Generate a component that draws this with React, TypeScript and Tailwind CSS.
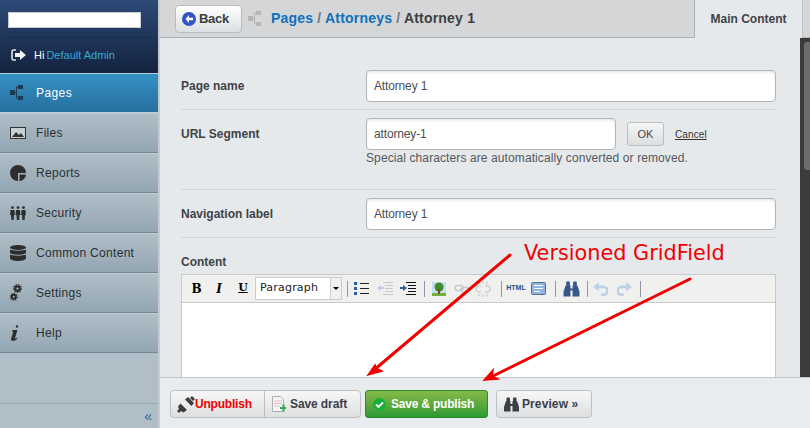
import React from 'react';

const font = { fontFamily: '"Liberation Sans", Arial, sans-serif' };

const SiteTreeIcon = ({ color = '#1c3a52', className = '' }: { color?: string; className?: string }) => (
  <svg width="14" height="16" viewBox="0 0 14 16" className={className}>
    <rect x="0" y="5" width="5" height="5" fill={color} />
    <rect x="8" y="0" width="5" height="4" fill={color} />
    <rect x="8" y="11" width="5" height="4" fill={color} />
    <path d="M5 7.5h2M6.5 2v11M6.5 2h2M6.5 13h2" stroke={color} strokeWidth="1" fill="none" />
  </svg>
);

const FilesIcon = () => (
  <svg width="16" height="12" viewBox="0 0 16 12">
    <rect x="0.5" y="0.5" width="15" height="11" fill="#c9d0d5" stroke="#333" />
    <path d="M2 10l4-5 3 3 2-2 3 4z" fill="#333" />
  </svg>
);

const ReportsIcon = () => (
  <svg width="16" height="16" viewBox="0 0 16 16" fill="#2e2e2e">
    <path d="M8 0a8 8 0 1 0 0 16V8h8a8 8 0 0 0-8-8z" />
    <path d="M9.500 9.500H16a7 7 0 0 1-6.500 6.500z" />
  </svg>
);

const Person = ({ x }: { x: number }) => (
  <g fill="#2e2e2e">
    <circle cx={x} cy="1.6" r="1.4" />
    <path d={`M${x - 2} 4h4l.4 5h-.9l-.4 5h-2.200l-.4-5h-.9z`} />
  </g>
);

const SecurityIcon = () => (
  <svg width="16" height="14" viewBox="0 0 16 14">
    <Person x={2.5} />
    <Person x={8} />
    <Person x={13.5} />
  </svg>
);

const DatabaseIcon = () => (
  <svg width="16" height="16" viewBox="0 0 16 16" fill="#2e2e2e">
    <ellipse cx="8" cy="2.5" rx="8" ry="2.5" />
    <path d="M0 4.5c1.500 1.500 14.500 1.500 16 0v3c0 3-16 3-16 0z" />
    <path d="M0 9.5c1.500 1.500 14.500 1.500 16 0v3.500c0 4-16 4-16 0z" />
  </svg>
);

const Gear = ({ cx, cy, r }: { cx: number; cy: number; r: number }) => (
  <g fill="none" stroke="#2e2e2e">
    <circle cx={cx} cy={cy} r={r * 0.5} strokeWidth={r * 0.5} />
    <circle cx={cx} cy={cy} r={r * 0.85} strokeWidth={r * 0.35} strokeDasharray="1.3 1.3" />
  </g>
);

const SettingsIcon = () => (
  <svg width="12" height="17" viewBox="0 0 12 17">
    <Gear cx={7.5} cy={4.5} r={4.5} />
    <Gear cx={3.8} cy={12.8} r={4} />
  </svg>
);

const HelpIcon = () => (
  <svg width="9" height="16" viewBox="0 0 9 16" fill="#2e2e2e">
    <circle cx="7" cy="1.5" r="1.2" />
    <path d="M3 5h4.500L5 13c0 .8.8.6 2-.2l.5.6C6 15 4.800 15.700 2.800 15.700 1 15.700.8 14.500 1.200 13.300L3.200 7 1.800 6.600z" />
  </svg>
);

const LogoutIcon = () => (
  <svg width="15" height="12" viewBox="0 0 15 12">
    <path d="M5 1H2.500Q1 1 1 2.500v7Q1 11 2.500 11H5" fill="none" stroke="#dfe4e8" strokeWidth="1.600" />
    <path d="M4 4h5V1l6 5-6 5V8H4z" fill="#f2f4f5" />
  </svg>
);

const BinocularsIcon = ({ fill = '#3a3f44', w = 15, h = 15 }: { fill?: string; w?: number; h?: number }) => (
  <svg width={w} height={h} viewBox="0 0 15 15" fill={fill}>
    <rect x="2.500" y="0.500" width="3.500" height="4" rx="1" />
    <rect x="9" y="0.500" width="3.500" height="4" rx="1" />
    <path d="M2 4h4.500v3h2V4H13l2 6v4.500H8.500V9h-2v5.500H0V10z" />
  </svg>
);

const navItems = [
  { label: 'Files', icon: <FilesIcon /> },
  { label: 'Reports', icon: <ReportsIcon /> },
  { label: 'Security', icon: <SecurityIcon /> },
  { label: 'Common Content', icon: <DatabaseIcon /> },
  { label: 'Settings', icon: <SettingsIcon /> },
  { label: 'Help', icon: <HelpIcon /> },
];

const Sidebar = () => (
  <aside className="w-[160px] shrink-0 h-full flex flex-col bg-[#b0bec7] border-r-2 border-[#c6cbcf]">
    <div className="h-[73px] px-[6px] pt-[12px] bg-gradient-to-b from-[#2c4a77] to-[#14233f]">
      <div className="ml-[2px] w-[133px] h-[16px] bg-white border border-[#c8ccd0]" />
      <div className="mt-[9px] border-t border-[#17324a] flex items-center h-[35px] pl-[5px] text-[11px]">
        <span className="w-[23px] flex"><LogoutIcon /></span>
        <span className="text-white">Hi</span>
        <span className="text-[#35a9d4] ml-[2px]">Default Admin</span>
      </div>
    </div>
    <div className="h-[40px] flex items-center bg-gradient-to-b from-[#3590c4] to-[#26709f] border-y border-[#b7cfdd] text-white text-[12px] tracking-[0.4px]">
      <span className="w-[36px] pl-[10px] flex"><SiteTreeIcon /></span>
      Pages
    </div>
    {navItems.map(item => (
      <div
        key={item.label}
        className="h-[40px] flex items-center bg-gradient-to-b from-[#b0bec7] to-[#93a6b3] border-b border-[#6f8899] shadow-[inset_0_1px_0_#c0ccd3] text-[#2b2f33] text-[12px] tracking-[0.3px]"
      >
        <span className="w-[36px] pl-[10px] flex items-center">{item.icon}</span>
        {item.label}
      </div>
    ))}
    <div className="flex-1" />
    <div className="h-[25px] border-t border-[#98a9b5] flex items-center justify-end pr-[6px] text-[14px] leading-none text-[#2f6a96]">
      «
    </div>
  </aside>
);

const TopBar = () => (
  <div className="h-[38px] flex bg-[#d4d6d8] shrink-0">
    <div className="flex-1 flex items-center pl-[15px] border-b border-r border-[#aeb0b3]">
      <button className="h-[28px] w-[67px] flex items-center gap-[3px] pl-[6px] rounded-[4px] border border-[#b9bcbf] bg-gradient-to-b from-white to-[#dcdfe1] text-[13px] tracking-[-0.3px] font-bold text-[#3d3d3f]">
        <svg width="14" height="14" viewBox="0 0 14 14">
          <circle cx="7" cy="7" r="7" fill="#2f55c8" />
          <path d="M7 3L3.500 7 7 11V8.300h4V5.700H7z" fill="#fff" />
        </svg>
        Back
      </button>
      <SiteTreeIcon color="#b4b6b8" className="ml-[6px]" />
      <div className="ml-[9px] text-[14px] font-bold tracking-[0.2px] text-[#3f3f42]">
        <span className="text-[#0f70bc]">Pages</span>
        <span className="text-[#6d7a85]"> / </span>
        <span className="text-[#0f70bc]">Attorneys</span>
        <span className="text-[#6d7a85]"> / </span>
        Attorney 1
      </div>
    </div>
    <div className="w-[107px] bg-[#e6e9ec] flex items-center justify-center text-[12px] font-bold text-[#3f4347]">
      Main Content
    </div>
    <div className="w-[8px] border-b border-l border-[#aeb0b3] border-l-[#c0c2c4]" />
  </div>
);

const TextField = ({ value, className = 'w-[410px]' }: { value: string; className?: string }) => (
  <div className={`${className} h-[32px] flex items-center px-[7px] bg-white rounded-[4px] border border-[#b3b5b7] shadow-[inset_0_2px_2px_#ececec] text-[12px] tracking-[-0.15px] text-[#4a4d50]`}>
    {value}
  </div>
);

const Toolbtn = ({ children, className = 'w-[24px]' }: { children: React.ReactNode; className?: string }) => (
  <span className={`${className} h-[20px] flex items-center justify-center`}>{children}</span>
);

const Sep = ({ className = '' }: { className?: string }) => <span className={`w-px h-[16px] bg-[#8d99a8] ${className}`} />;

const serif = { fontFamily: '"DejaVu Serif", serif' };

const EditorToolbar = () => (
  <div className="h-[28px] flex items-center pl-[4px] bg-[#f0f0ee] border-b border-[#c9c9c9]" style={{ fontFamily: '"DejaVu Sans", sans-serif' }}>
    <Toolbtn className="w-[21px]"><b className="text-[12px] text-black" style={serif}>B</b></Toolbtn>
    <Toolbtn className="w-[24px]"><i className="font-bold text-[12px] text-black" style={serif}>I</i></Toolbtn>
    <Toolbtn className="w-[24px]"><u className="font-bold text-[11px] text-black" style={serif}>U</u></Toolbtn>
    <div className="w-[87px] h-[23px] flex bg-white border border-[#cccccc] text-[11px] text-[#222] tracking-[0.2px]">
      <span className="flex-1 flex items-center pl-[4px]">Paragraph</span>
      <span className="w-[11px] bg-[#f0f0f0] border-l border-[#cccccc] flex items-center justify-center">
        <span className="w-0 h-0 border-x-[3px] border-x-transparent border-t-[3px] border-t-black" />
      </span>
    </div>
    <Sep className="ml-[5px]" />
    <Toolbtn className="w-[27px]">
      <svg width="15" height="13" viewBox="0 0 15 13"><path d="M6 1.500h9M6 6.500h9M6 11.500h9" stroke="#222" strokeWidth="1.200" /><path d="M0 0h3v3H0zM0 5h3v3H0zM0 10h3v3H0z" fill="#2a5f9e" /></svg>
    </Toolbtn>
    <Toolbtn className="w-[20px]">
      <svg width="16" height="13" viewBox="0 0 16 13"><path d="M6 .5h10M8 3.500h8M8 6.500h8M8 9.500h8M6 12.500h10" stroke="#c5c8cb" /><path d="M0 6l4-3v2h3v2H4v2z" fill="#bcd0e6" /></svg>
    </Toolbtn>
    <Toolbtn className="w-[26px]">
      <svg width="16" height="13" viewBox="0 0 16 13"><path d="M6 .5h10M8 3.500h8M8 6.500h8M8 9.500h8M6 12.500h10" stroke="#111" /><path d="M7 6L3 3v2H0v2h3v2z" fill="#2a5f9e" /></svg>
    </Toolbtn>
    <Sep className="ml-[3px]" />
    <Toolbtn className="w-[28px]">
      <svg width="14" height="14" viewBox="0 0 14 14"><rect width="14" height="14" fill="#bfe0f5" /><rect y="11" width="14" height="3" fill="#6fb33c" /><circle cx="7" cy="5" r="4.500" fill="#3f8a2a" /><rect x="6" y="7" width="2" height="5" fill="#7a4a20" /></svg>
    </Toolbtn>
    <Toolbtn className="w-[18px]">
      <svg width="16" height="10" viewBox="0 0 16 10" fill="none" stroke="#c9ccce" strokeWidth="1.600"><rect x="1" y="1.500" width="8" height="5" rx="2.500" /><rect x="7" y="3.500" width="8" height="5" rx="2.500" /></svg>
    </Toolbtn>
    <Toolbtn className="w-[24px]">
      <svg width="16" height="16" viewBox="0 0 16 16" fill="none" stroke="#cfd2d4" strokeWidth="1.500"><path d="M6 5H4a2.500 2.500 0 0 0 0 6h2M10 5h2a2.500 2.500 0 0 1 0 6h-2M8 0v3M8 13v3M3 1l2 2M13 1l-2 2M3 15l2-2M13 15l-2-2" /></svg>
    </Toolbtn>
    <Sep className="ml-[6px]" />
    <Toolbtn className="w-[28px]"><span className="text-[7px] font-bold text-[#2a4f86]" style={font}>HTML</span></Toolbtn>
    <Toolbtn className="w-[17px]">
      <svg width="15" height="13" viewBox="0 0 15 13"><rect x=".5" y=".5" width="14" height="12" rx="1" fill="#8fb4e4" stroke="#5a6f8c" /><path d="M3 3.500h9M3 6.500h9M3 9.500h6" stroke="#fff" /></svg>
    </Toolbtn>
    <Sep className="ml-[8px]" />
    <Toolbtn className="w-[30px]"><BinocularsIcon fill="#37578c" w={17} h={16} /></Toolbtn>
    <Sep className="ml-[1px]" />
    <Toolbtn className="w-[24px]">
      <svg width="15" height="15" viewBox="0 0 13 13" fill="none"><path d="M4 5h5a3 3 0 0 1 0 7H7" stroke="#bcd0e6" strokeWidth="2.400" /><path d="M0 5l5-4v8z" fill="#bcd0e6" /></svg>
    </Toolbtn>
    <Toolbtn className="w-[24px]">
      <svg width="15" height="15" viewBox="0 0 13 13" fill="none"><path d="M9 5H4a3 3 0 0 0 0 7h2" stroke="#bcd0e6" strokeWidth="2.400" /><path d="M13 5L8 1v8z" fill="#bcd0e6" /></svg>
    </Toolbtn>
    <Sep className="ml-[4px]" />
  </div>
);

const Label = ({ children }: { children: React.ReactNode }) => (
  <div className="w-[185px] text-[12px] font-bold text-[#3f4347]">{children}</div>
);

const Form = () => (
  <div className="flex-1 min-h-0 flex overflow-hidden bg-[#e6e9ec]">
    <div className="flex-1 min-w-0 pl-[21px] pr-[24px] pt-[32px]">
      <div className="h-[40px] flex items-center border-b border-[#d2d4d6] pb-[8px]">
        <Label>Page name</Label>
        <TextField value="Attorney 1" />
      </div>
      <div className="h-[80px] pt-[8px] border-b border-[#d2d4d6] flex">
        <div className="pt-[7px]"><Label>URL Segment</Label></div>
        <div>
          <div className="flex items-center">
            <TextField value="attorney-1" className="w-[250px]" />
            <button className="ml-[11px] w-[37px] h-[24px] rounded-[3px] border border-[#bcbec0] bg-gradient-to-b from-[#f6f6f6] to-[#dcdedf] text-[11px] text-[#444]">OK</button>
            <a className="ml-[11px] text-[10px] tracking-[0.1px] text-[#333] underline">Cancel</a>
          </div>
          <p className="text-[12px] leading-[16px] tracking-[0.1px] text-[#55585b]">Special characters are automatically converted or removed.</p>
        </div>
      </div>
      <div className="h-[48px] pt-[8px] flex items-start border-b border-[#d2d4d6]">
        <div className="pt-[7px]"><Label>Navigation label</Label></div>
        <TextField value="Attorney 1" />
      </div>
      <div className="pt-[16px] text-[12px] font-bold text-[#3f4347] leading-[16px]">Content</div>
      <div className="mt-[4px] h-[200px] bg-white border border-[#c9c9c9]">
        <EditorToolbar />
      </div>
    </div>
    <div className="w-[10px] shrink-0 pl-[4px] pt-[4px] bg-[#3c3c3c]">
      <div className="h-[128px] rounded-l-[3px] bg-[#6d6d6d]" />
    </div>
  </div>
);

const Footer = () => (
  <div className="h-[51px] shrink-0 flex items-center pl-[10px] pt-[2px] bg-[#e9ecef] border-t border-[#c4c6c8] text-[12px] font-bold tracking-[-0.1px] text-[#3a3f4a]">
    <div className="h-[28px] flex rounded-[4px] border border-[#bdbfc1] bg-gradient-to-b from-[#f7f7f7] to-[#dddfe0]">
      <div className="w-[94px] flex items-center pl-[6px] border-r border-[#bdbfc1] text-[#f00000] tracking-[-0.2px]">
        <svg width="18" height="17" viewBox="0 0 18 17" fill="#3c3c3c"><path d="M11 1l6 6-2.500 3L8 3.500zM15 0l3 3-2 2-3-3zM3.500 7.500L10 14l-3.500 2.500L4 15l-2 2-2-2 2-2-1-2.500z" /></svg>
        Unpublish
      </div>
      <div className="w-[95px] flex items-center gap-[4px] pl-[7px]">
        <svg width="14" height="17" viewBox="0 0 14 17"><path d="M.5.5h8l3 3v12H.5z" fill="#f4f6f8" stroke="#a9acb0" /><path d="M2 5h8M2 7.500h8M2 10h6" stroke="#e2a9b3" strokeWidth=".8" /><path d="M8 11h2.500V8.500h2V11H15v2h-2.500v2.500h-2V13H8z" fill="#2ea84a" /></svg>
        Save draft
      </div>
    </div>
    <div className="ml-[4px] w-[123px] h-[28px] flex items-center gap-[5px] pl-[7px] rounded-[3px] border border-[#2c8a2c] bg-gradient-to-b from-[#84ba48] to-[#289a34] text-white tracking-[-0.2px]">
      <svg width="13" height="13" viewBox="0 0 13 13"><circle cx="6.500" cy="6.500" r="6.500" fill="#16b13a" /><path d="M3 6.500l2.500 2.500L10 4.500" fill="none" stroke="#fff" strokeWidth="1.800" /></svg>
      Save &amp; publish
    </div>
    <div className="ml-[8px] w-[96px] h-[28px] flex items-center gap-[3px] pl-[7px] rounded-[4px] border border-[#bdbfc1] bg-gradient-to-b from-[#f7f7f7] to-[#dddfe0] tracking-[0.1px]">
      <BinocularsIcon />
      Preview »
    </div>
  </div>
);

const App: React.FC = () => (
  <div className="relative w-[810px] h-[428px] flex overflow-hidden" style={font}>
    <Sidebar />
    <main className="flex-1 min-w-0 flex flex-col">
      <TopBar />
      <Form />
      <Footer />
    </main>
    {/* annotation drawn over the page */}
    <svg className="absolute inset-0" width="810" height="428" viewBox="0 0 810 428" fill="none">
      <path d="M510 255L374 370" stroke="#f00000" strokeWidth="3" strokeLinecap="round" />
      <path d="M375 365L368 375L382 371L376 368Z" fill="#f00000" stroke="#f00000" strokeWidth="1.500" />
      <path d="M690 279L491 377" stroke="#f00000" strokeWidth="3" strokeLinecap="round" />
      <path d="M493 370L484 380L498 379L492 376Z" fill="#f00000" stroke="#f00000" strokeWidth="1.500" />
    </svg>
    <div className="absolute left-[524px] top-[240px] text-[20.8px] leading-[26px] text-[#f00000]" style={{ fontFamily: '"DejaVu Sans", sans-serif' }}>
      Versioned GridField
    </div>
  </div>
);

export default App;
